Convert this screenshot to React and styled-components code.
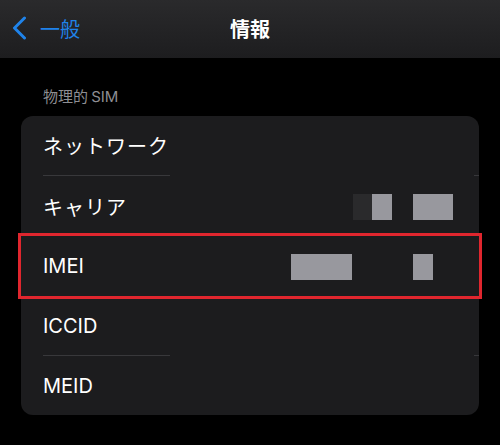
import React from 'react';
import styled, { createGlobalStyle } from 'styled-components';

const GlobalStyle = createGlobalStyle`
  html, body {
    margin: 0;
    padding: 0;
    background: #000;
  }
  body {
    font-family: Inter, "Noto Sans", "Noto Sans CJK JP", sans-serif;
    -webkit-font-smoothing: antialiased;
  }
`;

const Screen = styled.div`
  width: 500px;
  height: 445px;
  background: #000;
  overflow: hidden;
  display: flex;
  flex-direction: column;
`;

const NavBar = styled.header`
  height: 58px;
  flex: none;
  display: grid;
  grid-template-columns: 1fr auto 1fr;
  align-items: center;
  background: linear-gradient(180deg, #2a2a2c 0%, #1d1d1f 100%);
  padding-bottom: 2px;
  box-sizing: border-box;
`;

const BackButton = styled.a`
  display: flex;
  align-items: center;
  gap: 13px;
  padding-left: 12px;
  color: #1f83ea;
  font-size: 20px;
  font-family: "Noto Sans CJK JP", sans-serif;
  text-decoration: none;
  cursor: pointer;
  svg {
    display: block;
  }
`;

const Title = styled.h1`
  margin: 0;
  color: #fff;
  font-size: 20px;
  font-weight: 700;
  font-family: "Noto Sans CJK JP", sans-serif;
`;

const Content = styled.main`
  padding: 29px 21px 0;
`;

const SectionHeader = styled.div`
  padding-left: 22px;
  color: #8e8e93;
  font-size: 15px;
  line-height: 20px;
  font-family: Inter, "Noto Sans CJK JP", sans-serif;
  word-spacing: -1px;
  margin-bottom: 9px;
`;

const Card = styled.section`
  background: #1c1c1e;
  border-radius: 12px;
`;

const Row = styled.div`
  height: ${p => p.$h || 60}px;
  display: flex;
  align-items: center;
  padding-left: 22px;
  box-sizing: border-box;
  color: #fff;
  font-size: 20px;
  font-family: Inter, "Noto Sans CJK JP", sans-serif;
  outline: ${p => (p.$highlight ? '3px solid #e0262e' : 'none')};
  position: relative;
`;

const Label = styled.span`
  flex: 1;
  letter-spacing: ${p => (p.$kana ? '1px' : '0')};
`;

const Value = styled.div`
  display: flex;
  align-items: center;
  padding-right: ${p => p.$pad}px;
`;

const Redacted = styled.span`
  display: block;
  width: ${p => p.$w}px;
  height: 26px;
  margin-left: ${p => p.$gap || 0}px;
  background: ${p => p.$color || '#98989e'};
  margin-top: ${p => p.$dy || 0}px;
`;

const Divider = styled.div`
  height: 1px;
  display: flex;
  padding-left: 22px;
`;

const Segment = styled.span`
  display: block;
  height: 1px;
  width: ${p => p.$w}px;
  background: #38383b;
  margin-left: ${p => (p.$end ? 'auto' : '0')};
`;

const Chevron = () => (
  <svg width="15" height="24" viewBox="0 0 15 24" fill="none">
    <path
      d="M12.5 2 L2.5 12 L12.5 22"
      stroke="currentColor"
      strokeWidth="3"
      strokeLinecap="round"
      strokeLinejoin="round"
    />
  </svg>
);

export default function App() {
  return (
    <>
      <GlobalStyle />
      <Screen>
        <NavBar>
          <BackButton>
            <Chevron />
            <span>一般</span>
          </BackButton>
          <Title>情報</Title>
          <div />
        </NavBar>
        <Content>
          <SectionHeader>物理的 SIM</SectionHeader>
          <Card>
            <Row $h={59}>
              <Label $kana>ネットワーク</Label>
            </Row>
            <Divider>
              <Segment $w={127} />
              <Segment $w={5} $end />
            </Divider>
            <Row>
              <Label $kana>キャリア</Label>
              <Value $pad={26}>
                <Redacted $w={19} $color="#2a2a2c" $dy={2} />
                <Redacted $w={20} $dy={2} />
                <Redacted $w={40} $gap={21} $dy={2} />
              </Value>
            </Row>
            <Row $highlight>
              <Label>IMEI</Label>
              <Value $pad={46}>
                <Redacted $w={61} $dy={2} />
                <Redacted $w={20} $gap={61} $dy={2} />
              </Value>
            </Row>
            <Row $h={59}>
              <Label>ICCID</Label>
            </Row>
            <Divider>
              <Segment $w={127} />
              <Segment $w={5} $end />
            </Divider>
            <Row $h={59}>
              <Label>MEID</Label>
            </Row>
          </Card>
        </Content>
      </Screen>
    </>
  );
}
